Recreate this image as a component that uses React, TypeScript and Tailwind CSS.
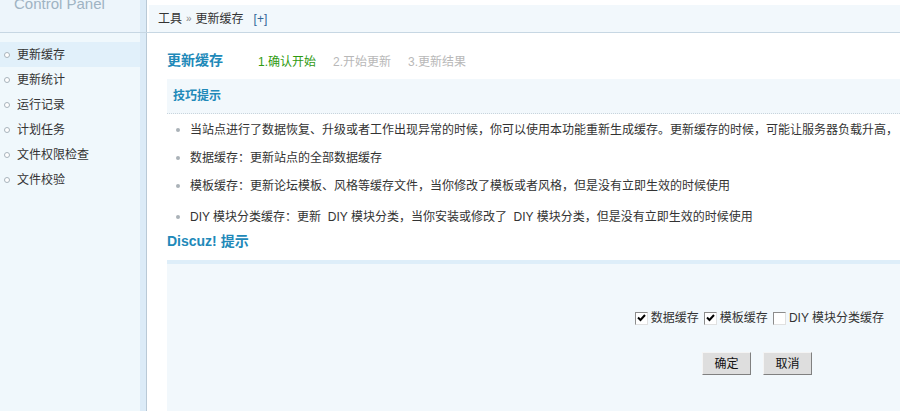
import React from 'react'

const menu = ['更新缓存', '更新统计', '运行记录', '计划任务', '文件权限检查', '文件校验']

const tips = [
  '当站点进行了数据恢复、升级或者工作出现异常的时候，你可以使用本功能重新生成缓存。更新缓存的时候，可能让服务器负载升高，',
  '数据缓存：更新站点的全部数据缓存',
  '模板缓存：更新论坛模板、风格等缓存文件，当你修改了模板或者风格，但是没有立即生效的时候使用',
  'DIY 模块分类缓存：更新  DIY 模块分类，当你安装或修改了  DIY 模块分类，但是没有立即生效的时候使用',
]

function Check({ checked, label }: { checked?: boolean; label: string }) {
  return (
    <label className="flex items-center">
      <span className="flex h-[13px] w-[13px] items-center justify-center border border-[#8c8c8c] border-r-[#e0e0e0] border-b-[#e0e0e0] bg-white">
        {checked && (
          <svg width="9" height="8" viewBox="0 0 9 8">
            <path d="M1 3.5 L3.5 6 L8 1" stroke="#000" strokeWidth="2" fill="none" />
          </svg>
        )}
      </span>
      <span className="ml-[3px] mr-[5px]">{label}</span>
    </label>
  )
}

function Btn({ children }: { children: React.ReactNode }) {
  return (
    <button className="h-[23px] w-[49px] border border-[#f4f4f4] border-r-[#808080] border-b-[#808080] bg-[#dedede] text-[12px] text-[#111]">
      {children}
    </button>
  )
}

export default function App() {
  return (
    <div
      className="w-[900px] h-[411px] overflow-hidden bg-white text-[12px] text-[#333]"
      style={{ fontFamily: '"Liberation Sans", "Noto Sans CJK SC", sans-serif' }}
    >
      {/* 顶部 */}
      <div className="flex h-[33px] border-b border-[#c7d7e3]">
        <div className="w-[140px] overflow-hidden bg-[#edf5fb] pl-[14px]">
          <div className="-mt-[5px] text-[15px] leading-[18px] text-[#9fb3c3]">Control Panel</div>
        </div>
        <div className="w-[6px] bg-[#dcebf7]" />
        <div className="w-px bg-[#b9c9d6]" />
        <div className="flex-1 pt-[5px] pl-[2px]">
          <div className="flex h-full items-center bg-[#f2f8fc] pl-[9px] text-[#333]">
            工具 <span className="mx-[4px] text-[10px] text-[#888]">»</span> 更新缓存
            <span className="ml-[10px] text-[#336699]">[+]</span>
          </div>
        </div>
      </div>

      <div className="flex h-[378px]">
        {/* 侧栏 */}
        <ul className="w-[140px] bg-[#f0f8fc] pt-[9px]">
          {menu.map((m, i) => (
            <li
              key={m}
              className={`flex h-[25px] items-center pl-[4px] ${i === 0 ? 'bg-[#e1f0fa]' : ''}`}
            >
              <span className="h-[6px] w-[6px] shrink-0 rounded-full border border-[#a8b4bc] bg-white" />
              <span className="ml-[7px]">{m}</span>
            </li>
          ))}
        </ul>
        <div className="w-[6px] bg-[#dcebf7]" />
        <div className="w-px bg-[#b9c9d6]" />

        {/* 主体 */}
        <div className="min-w-0 flex-1 overflow-hidden pl-[20px]">
          <div className="flex h-[46px] items-end pb-[8px]">
            <h3 className="w-[91px] whitespace-nowrap text-[14px] font-bold text-[#2189b9]">更新缓存</h3>
            <span className="w-[75px] text-[#2f9a10]">1.确认开始</span>
            <span className="w-[75px] text-[#b8b8b8]">2.开始更新</span>
            <span className="text-[#b8b8b8]">3.更新结果</span>
          </div>
          <div className="flex h-[35px] items-center border-b border-dotted border-[#c8d4dc] bg-[#f2f8fc] pl-[6px] font-bold text-[#2189b9]">
            技巧提示
          </div>
          <ul className="pt-[2px]">
            {tips.map(t => (
              <li key={t} className="flex h-[28px] items-center whitespace-nowrap pl-[9px] last:h-[31px] last:pt-[3px]">
                <span className="h-[4px] w-[4px] shrink-0 rounded-full bg-[#aab2b8]" />
                <span className="ml-[10px] whitespace-pre">{t}</span>
              </li>
            ))}
          </ul>
          <h3 className="flex h-[20px] items-center text-[14px] font-bold text-[#2189b9]">Discuz! 提示</h3>
          <div className="mt-[9px] h-[200px] border-t-[4px] border-[#deeef9] bg-[#f2f8fc]">
            <div className="flex justify-end pt-[45px] pr-[11px]">
              <Check checked label="数据缓存" />
              <Check checked label="模板缓存" />
              <Check label="DIY 模块分类缓存" />
            </div>
            <div className="mt-[25px] flex justify-end gap-[12px] pr-[88px]">
              <Btn>确定</Btn>
              <Btn>取消</Btn>
            </div>
          </div>
        </div>
      </div>
    </div>
  )
}
